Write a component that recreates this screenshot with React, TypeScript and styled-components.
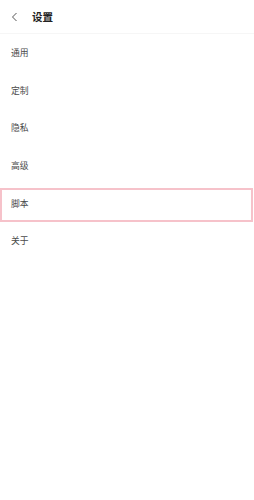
import React from "react";
import styled, { createGlobalStyle } from "styled-components";

const Global = createGlobalStyle`
  html, body { margin: 0; padding: 0; background: #fff; }
  body { font-family: "Noto Sans CJK SC", "Noto Sans", sans-serif; }
`;

const Page = styled.div`
  width: 254px;
  height: 500px;
  background: #fff;
  display: flex;
  flex-direction: column;
`;

const Header = styled.div`
  height: 34px;
  display: flex;
  align-items: center;
  gap: 12px;
  padding-left: 10px;
  border-bottom: 1px solid #f6f6f6;
  box-sizing: border-box;
`;

const Back = styled.svg`
  width: 10px;
  height: 10px;
`;

const Title = styled.div`
  font-size: 10.5px;
  font-weight: 700;
  color: #222;
`;

const List = styled.div`
  display: flex;
  flex-direction: column;
`;

const Item = styled.div<{ $active?: boolean }>`
  position: relative;
  height: 37.5px;
  display: flex;
  align-items: center;
  padding-left: 11px;
  font-size: 8.8px;
  color: #4a4a4a;
  box-sizing: border-box;
  ${(p) =>
    p.$active &&
    `
    padding-top: 2px;
    &::after {
      content: "";
      position: absolute;
      left: 0;
      right: 1px;
      top: 4px;
      bottom: 0;
      border: 2px solid #f6c2ca;
    }
  `}
`;

const items = ["通用", "定制", "隐私", "高级", "脚本", "关于"];

export default function App() {
  return (
    <Page>
      <Global />
      <Header>
        <Back viewBox="0 0 10 10">
          <path d="M6.5 1 L2.5 5 L6.5 9" fill="none" stroke="#555" strokeWidth="1" />
        </Back>
        <Title>设置</Title>
      </Header>
      <List>
        {items.map((t) => (
          <Item key={t} $active={t === "脚本"}>
            {t}
          </Item>
        ))}
      </List>
    </Page>
  );
}
